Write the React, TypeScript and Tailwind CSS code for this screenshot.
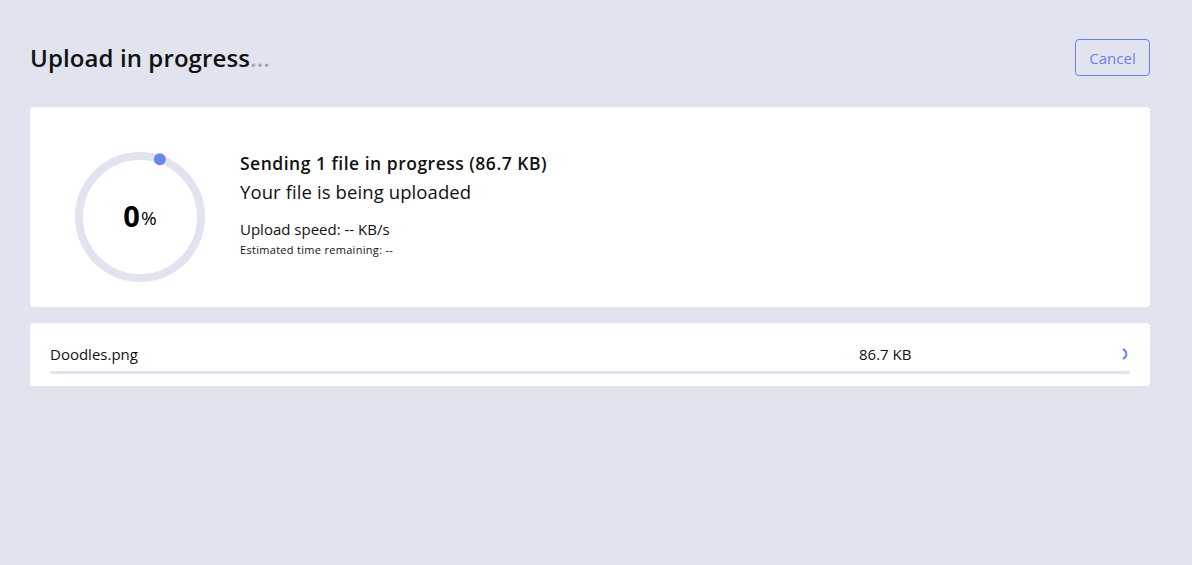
import React from 'react';

function ProgressRing({ percent }: { percent: number }) {
  const r = 61;
  const angle = (19 * Math.PI) / 180;
  const cx = 65 + r * Math.sin(angle);
  const cy = 65 - r * Math.cos(angle);
  return (
    <div className="relative w-[130px] h-[130px] shrink-0">
      <svg width="130" height="130" viewBox="0 0 130 130" className="absolute inset-0">
        <circle cx="65" cy="65" r={r} fill="none" stroke="#e1e3ef" strokeWidth="8" />
        <circle cx={cx} cy={cy} r="6" fill="#6a87ee" />
      </svg>
      <div className="absolute inset-0 flex items-center justify-center text-black -mt-[3px]">
        <span className="text-[29px] font-bold leading-none">{percent}</span>
        <span className="text-[19px] leading-none mt-[5px] ml-[1px]">%</span>
      </div>
    </div>
  );
}

export default function App() {
  return (
    <div
      className="min-h-[565px] w-full bg-[#e1e3ef] pl-[30px] pr-[42px] pt-[39px] text-[#111]"
      style={{ fontFamily: '"Open Sans", "Noto Sans", sans-serif' }}
    >
      <div className="flex items-center justify-between h-[37px]">
        <h1 className="text-[24px] font-semibold tracking-[0.1px] mt-[1px]">
          Upload in progress<span className="text-[#a3a6b4]">...</span>
        </h1>
        <button className="h-[37px] w-[75px] rounded-[4px] border border-[#6982ea] text-[15px] text-[#6982ea] pt-[1px]">
          Cancel
        </button>
      </div>

      <div className="mt-[31px] h-[200px] rounded-[4px] bg-white flex items-start pl-[45px] pt-[45px]">
        <ProgressRing percent={0} />
        <div className="ml-[35px]">
          <div className="text-[17.5px] font-semibold leading-[22px] tracking-[0.5px]">Sending 1 file in progress (86.7 KB)</div>
          <div className="text-[18.5px] leading-[24px] mt-[6px] tracking-[0.1px]">Your file is being uploaded</div>
          <div className="text-[15px] leading-[18px] mt-[16px]">Upload speed: -- KB/s</div>
          <div className="text-[11px] leading-[14px] mt-[5px] tracking-[0.3px]">Estimated time remaining: --</div>
        </div>
      </div>

      <div className="mt-[16px] h-[63px] rounded-[4px] bg-white px-[20px] pt-[21px]">
        <div className="flex items-center h-[20px] text-[15px]">
          <span className="flex-1">Doodles.png</span>
          <span className="w-[262px]">86.7 KB</span>
          <svg width="8" height="14" viewBox="0 0 8 14" className="mr-[1px]">
            <path d="M2.5 2.5 A5 5 0 0 1 2.5 11.5" fill="none" stroke="#6a87ee" strokeWidth="2" strokeLinecap="round" />
          </svg>
        </div>
        <div className="mt-[7px] h-[3px] rounded-full bg-[#e1e3ef]" />
      </div>
    </div>
  );
}
